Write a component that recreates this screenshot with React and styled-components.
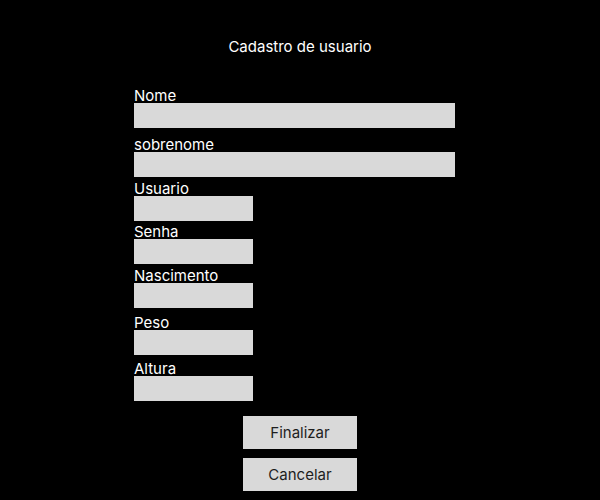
import styled, { createGlobalStyle } from "styled-components";

const GlobalStyle = createGlobalStyle`
  html, body {
    margin: 0;
    padding: 0;
    background: #000000;
  }
  body {
    font-family: Inter, "Noto Sans", sans-serif;
  }
`;

const Page = styled.div`
  width: 600px;
  height: 500px;
  background: #000000;
  display: flex;
  flex-direction: column;
  padding-top: 38px;
  box-sizing: border-box;
`;

const Title = styled.h1`
  margin: 0;
  font-size: 15px;
  line-height: 18px;
  font-weight: 400;
  color: #ffffff;
  text-align: center;
`;

const Form = styled.form`
  display: flex;
  flex-direction: column;
  margin: 29px 0 0 134px;
`;

const Field = styled.label`
  display: flex;
  flex-direction: column;
  margin-top: ${(p) => p.$gap || 0}px;
`;

const Label = styled.span`
  font-size: 15px;
  line-height: 18px;
  padding-top: 2px;
  margin-bottom: -2px;
  color: #ffffff;
`;

const Input = styled.input`
  width: ${(p) => (p.$wide ? 321 : 119)}px;
  height: 25px;
  box-sizing: border-box;
  border: none;
  outline: none;
  background: #d9d9d9;
  padding: 0 6px;
  font-family: inherit;
  font-size: 14px;
`;

const Actions = styled.div`
  display: flex;
  flex-direction: column;
  align-items: center;
  gap: 9px;
  margin-top: 15px;
`;

const Button = styled.button`
  width: 114px;
  height: 33px;
  border: none;
  background: #d9d9d9;
  color: #1e1e1e;
  font-family: inherit;
  font-size: 15px;
  padding-top: 1px;
  cursor: pointer;
`;

const fields = [
  { label: "Nome", wide: true, gap: 0 },
  { label: "sobrenome", wide: true, gap: 6 },
  { label: "Usuario", gap: 1 },
  { label: "Senha", gap: 0 },
  { label: "Nascimento", gap: 1 },
  { label: "Peso", gap: 4 },
  { label: "Altura", gap: 3 },
];

export default function App() {
  return (
    <>
      <GlobalStyle />
      <Page>
        <Title>Cadastro de usuario</Title>
        <Form onSubmit={(e) => e.preventDefault()}>
          {fields.map((f) => (
            <Field key={f.label} $gap={f.gap}>
              <Label>{f.label}</Label>
              <Input $wide={f.wide} />
            </Field>
          ))}
        </Form>
        <Actions>
          <Button type="button">Finalizar</Button>
          <Button type="button">Cancelar</Button>
        </Actions>
      </Page>
    </>
  );
}
